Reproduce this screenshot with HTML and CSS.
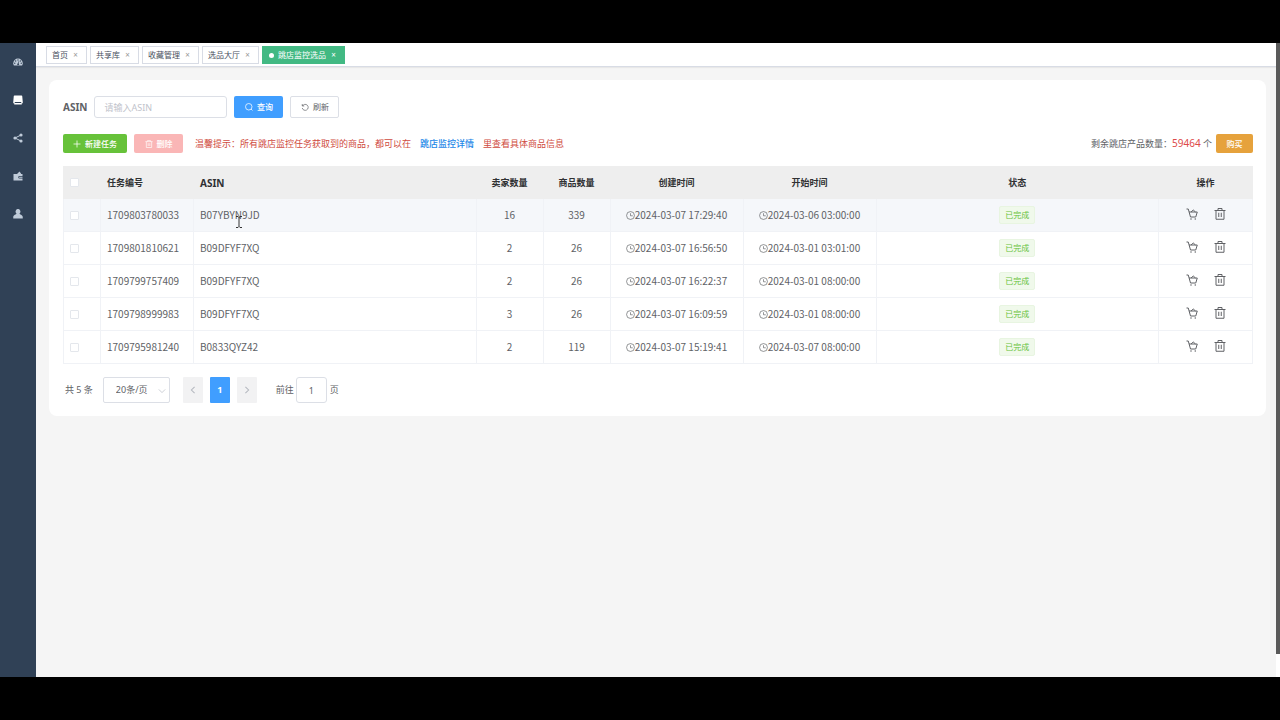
FILE: index.html
```html
<!DOCTYPE html>
<html lang="zh-CN">
<head>
<meta charset="utf-8">
<meta name="viewport" content="width=device-width, initial-scale=1">
<title>跳店监控选品</title>
<link rel="stylesheet" href="styles.css">
</head>
<body>
<svg class="sprite" aria-hidden="true">
  <symbol id="clock" viewBox="0 0 16 16"><g fill="none" stroke="currentColor" stroke-width="1.200"><circle cx="8" cy="8" r="7"/><path d="M8 4v4.500h4"/></g></symbol>
  <symbol id="cart" viewBox="0 0 24 24"><g fill="none" stroke="currentColor" stroke-width="2"><path d="M1 2h3.500L9 18h10.500L22.500 8H6"/><path d="M10 8l4.500-4L19 8"/></g><circle cx="10" cy="22" r="1.500" fill="currentColor"/><circle cx="18.500" cy="22" r="1.500" fill="currentColor"/></symbol>
  <symbol id="trash" viewBox="0 0 24 24"><g fill="none" stroke="currentColor" stroke-width="2"><path d="M1 5h22M8 5V1h8v4M4 5v17.500h16V5M9.500 9.500v8.500M14.500 9.500v8.500"/></g></symbol>
</svg>
<div class="screen">
  <div class="app">
    <nav class="sidebar" aria-label="主菜单">
      <a href="#" aria-label="首页"><svg viewBox="0 0 20 16"><path fill="currentColor" d="M10 1a9.500 9.500 0 0 0-9.500 9.500c0 1.800.5 3.300 1.300 4.500h16.400a8.500 8.500 0 0 0 1.300-4.500A9.500 9.500 0 0 0 10 1z"/><g fill="#304156"><circle cx="10" cy="4" r="1.300"/><circle cx="5.300" cy="6" r="1.300"/><circle cx="3.500" cy="10.500" r="1.300"/><circle cx="16.500" cy="10.500" r="1.300"/><circle cx="14.700" cy="6" r="1.300"/><path d="m11.500 6 1 .3-1.200 4.700a1.900 1.900 0 1 1-1.200-.3z"/></g></svg></a>
      <a href="#" class="current" aria-label="选品"><svg viewBox="0 0 20 20"><path fill="currentColor" d="M3 1h14a1.500 1.500 0 0 1 1.500 1.500L19.500 14H.5L1.500 2.500A1.500 1.500 0 0 1 3 1zM.5 14h3v2h13v-2h3v2.500h-2V19h-15v-2.500h-2z"/></svg></a>
      <a href="#" aria-label="分享"><svg viewBox="0 0 20 20"><path stroke="currentColor" stroke-width="2" fill="none" d="M16 4 4 10l12 6"/><g fill="currentColor"><circle cx="16" cy="4" r="3.200"/><circle cx="4" cy="10" r="3.200"/><circle cx="16" cy="16" r="3.200"/></g></svg></a>
      <a href="#" aria-label="钱包"><svg viewBox="0 0 20 20"><path fill="currentColor" d="M1 6h7l5-5 3 4v1h3v4h-6a2 2 0 0 0 0 5h6v4H1zM13 11.500h6v2h-6a1 1 0 0 1 0-2z"/></svg></a>
      <a href="#" aria-label="用户"><svg viewBox="0 0 20 20"><path fill="currentColor" d="M10 0a4.500 5 0 0 1 3 9c0 1.800 6.500 3 6.500 7v3H.5v-3c0-4 6.500-5.200 6.500-7a4.500 5 0 0 1 3-9z"/></svg></a>
    </nav>
    <main class="main">
      <div class="tabs">
        <a href="#" class="tab">首页<span class="close">×</span></a>
        <a href="#" class="tab">共享库<span class="close">×</span></a>
        <a href="#" class="tab">收藏管理<span class="close">×</span></a>
        <a href="#" class="tab">选品大厅<span class="close">×</span></a>
        <a href="#" class="tab active">跳店监控选品<span class="close">×</span></a>
      </div>
      <section class="card">
        <form class="search">
          <label for="asin">ASIN</label>
          <input id="asin" class="field" type="text" placeholder="请输入ASIN">
          <button type="button" class="btn primary"><svg viewBox="0 0 16 16"><g fill="none" stroke="currentColor" stroke-width="1.500"><circle cx="7.500" cy="7.500" r="6.500"/><path d="m12 12 3 3"/></g></svg>查询</button>
          <button type="button" class="btn plain"><svg viewBox="0 0 16 16"><path fill="none" stroke="currentColor" stroke-width="1.400" d="M2.500 2v4h4M3 6a6 6 0 1 1-.5 4"/></svg>刷新</button>
        </form>
        <div class="actions">
          <button type="button" class="btn success"><svg viewBox="0 0 16 16"><path stroke="currentColor" stroke-width="1.500" d="M8 1v14M1 8h14"/></svg>新建任务</button>
          <button type="button" class="btn danger" disabled><svg viewBox="0 0 24 24"><use href="#trash"/></svg>删除</button>
          <p class="tip"><span>温馨提示：所有跳店监控任务获取到的商品，都可以在</span><a href="#">跳店监控详情</a><span>里查看具体商品信息</span></p>
          <p class="quota">剩余跳店产品数量：<b>59464</b> 个</p>
          <button type="button" class="btn warning">购买</button>
        </div>
        <table class="grid">
          <colgroup><col class="c-check"><col class="c-id"><col><col class="c-num"><col class="c-num"><col class="c-time"><col class="c-time"><col><col class="c-ops"></colgroup>
          <thead>
            <tr><th class="left"><input type="checkbox" aria-label="全选"></th><th class="left">任务编号</th><th class="left latin">ASIN</th><th>卖家数量</th><th>商品数量</th><th>创建时间</th><th>开始时间</th><th>状态</th><th>操作</th></tr>
          </thead>
          <tbody>
            <tr class="hover"><td class="left"><input type="checkbox" aria-label="选择"></td><td class="left">1709803780033</td><td class="left">B07YBYN9JD</td><td>16</td><td>339</td><td><svg class="clock"><use href="#clock"/></svg>2024-03-07 17:29:40</td><td><svg class="clock"><use href="#clock"/></svg>2024-03-06 03:00:00</td><td><span class="tag">已完成</span></td><td><div class="ops"><button type="button" aria-label="商品"><svg><use href="#cart"/></svg></button><button type="button" aria-label="删除"><svg><use href="#trash"/></svg></button></div></td></tr>
            <tr><td class="left"><input type="checkbox" aria-label="选择"></td><td class="left">1709801810621</td><td class="left">B09DFYF7XQ</td><td>2</td><td>26</td><td><svg class="clock"><use href="#clock"/></svg>2024-03-07 16:56:50</td><td><svg class="clock"><use href="#clock"/></svg>2024-03-01 03:01:00</td><td><span class="tag">已完成</span></td><td><div class="ops"><button type="button" aria-label="商品"><svg><use href="#cart"/></svg></button><button type="button" aria-label="删除"><svg><use href="#trash"/></svg></button></div></td></tr>
            <tr><td class="left"><input type="checkbox" aria-label="选择"></td><td class="left">1709799757409</td><td class="left">B09DFYF7XQ</td><td>2</td><td>26</td><td><svg class="clock"><use href="#clock"/></svg>2024-03-07 16:22:37</td><td><svg class="clock"><use href="#clock"/></svg>2024-03-01 08:00:00</td><td><span class="tag">已完成</span></td><td><div class="ops"><button type="button" aria-label="商品"><svg><use href="#cart"/></svg></button><button type="button" aria-label="删除"><svg><use href="#trash"/></svg></button></div></td></tr>
            <tr><td class="left"><input type="checkbox" aria-label="选择"></td><td class="left">1709798999983</td><td class="left">B09DFYF7XQ</td><td>3</td><td>26</td><td><svg class="clock"><use href="#clock"/></svg>2024-03-07 16:09:59</td><td><svg class="clock"><use href="#clock"/></svg>2024-03-01 08:00:00</td><td><span class="tag">已完成</span></td><td><div class="ops"><button type="button" aria-label="商品"><svg><use href="#cart"/></svg></button><button type="button" aria-label="删除"><svg><use href="#trash"/></svg></button></div></td></tr>
            <tr><td class="left"><input type="checkbox" aria-label="选择"></td><td class="left">1709795981240</td><td class="left">B0833QYZ42</td><td>2</td><td>119</td><td><svg class="clock"><use href="#clock"/></svg>2024-03-07 15:19:41</td><td><svg class="clock"><use href="#clock"/></svg>2024-03-07 08:00:00</td><td><span class="tag">已完成</span></td><td><div class="ops"><button type="button" aria-label="商品"><svg><use href="#cart"/></svg></button><button type="button" aria-label="删除"><svg><use href="#trash"/></svg></button></div></td></tr>
          </tbody>
        </table>
        <div class="pager">
          <span class="total">共 5 条</span>
          <div class="size"><select aria-label="每页条数"><option>20条/页</option></select><svg viewBox="0 0 10 10"><path d="m1 3 4 4 4-4" fill="none" stroke="currentColor"/></svg></div>
          <div class="pages">
            <button type="button" aria-label="上一页" disabled><svg viewBox="0 0 10 10"><path d="M7 1 3 5l4 4" fill="none" stroke="currentColor" stroke-width="1.300"/></svg></button>
            <button type="button" class="on">1</button>
            <button type="button" aria-label="下一页" disabled><svg viewBox="0 0 10 10"><path d="m3 1 4 4-4 4" fill="none" stroke="currentColor" stroke-width="1.300"/></svg></button>
          </div>
          <label for="jump">前往</label><input id="jump" class="field jump" type="text" value="1"><span>页</span>
        </div>
      </section>
    </main>
    <div class="scroll"><div class="thumb"></div></div>
    <svg class="cursor" viewBox="0 0 6 12"><path d="M0 .5h2l1 1 1-1h2M3 1.500v9M0 11.500h2l1-1 1 1h2" fill="none" stroke="#333"/></svg>
  </div>
</div>
</body>
</html>
```
FILE: styles.css
```css
* { box-sizing: border-box; }
body {
  margin: 0;
  background: #000;
  color: #606266;
  font-family: "Noto Sans", "Noto Sans CJK SC", sans-serif;
  font-size: 9px;
  line-height: 14px;
}
p { margin: 0; }
a { color: inherit; text-decoration: none; }
button, input, select { font: inherit; color: inherit; margin: 0; }
.sprite { position: absolute; width: 0; height: 0; }

.screen { min-height: 100vh; padding: 43px 0; display: flex; }
.app { position: relative; flex: 1; display: flex; background: #f5f5f5; }

.sidebar {
  width: 36px;
  flex: none;
  display: grid;
  grid-auto-rows: 38px;
  align-content: start;
  color: #bfcbd9;
  background: #304156;
}
.sidebar a { display: grid; place-items: center; }
.sidebar svg { width: 10px; height: 10px; }
.sidebar .current { color: #fff; }

.main { flex: 1; min-width: 0; }
.tabs {
  display: flex;
  gap: 3px;
  height: 24px;
  padding: 3px 10px;
  background: #fff;
  border-bottom: 1px solid #d8dce5;
  box-shadow: 0 1px 1px #0000000d;
}
.tab {
  display: flex;
  align-items: center;
  height: 18px;
  padding: 0 5px;
  border: 1px solid #d8dce5;
  color: #495060;
  font-size: 8px;
}
.close { width: 11px; margin-left: 2px; text-align: center; color: #999; }
.tab.active { background: #42b983; border-color: #42b983; color: #fff; }
.tab.active .close { color: #fff; }
.tab.active::before {
  content: "";
  width: 5px;
  height: 5px;
  margin: 0 4px 0 1px;
  border-radius: 50%;
  background: #fff;
}

.card { margin: 13px 10px 0 13px; padding: 16px 13px 13px 14px; background: #fff; border-radius: 8px; }
.search { display: flex; align-items: center; gap: 7px; }
.search label { font-size: 10px; font-weight: 700; }
.field {
  width: 133px;
  height: 22px;
  padding: 0 9px;
  background: #fff;
  border: 1px solid #dcdfe6;
  border-radius: 3px;
  outline: 0;
}
.field::placeholder { color: #bfc3cb; opacity: 1; }
.btn {
  display: inline-flex;
  align-items: center;
  justify-content: center;
  gap: 4px;
  height: 19px;
  padding: 0 4px;
  border: 1px solid transparent;
  border-radius: 2px;
  color: #fff;
  font-size: 8px;
  font-weight: 500;
  white-space: nowrap;
}
.btn svg { flex: none; width: 8px; height: 8px; }
.search .btn { height: 22px; width: 49px; }
.primary { background: #409eff; }
.search .plain { background: #fff; border-color: #dcdfe6; color: #606266; font-weight: 400; }
.success { background: #67c23a; width: 64px; }
.danger { background: #fab6b6; width: 49px; }
.warning { background: #e6a23c; width: 37px; }

.actions { display: flex; align-items: center; gap: 7px; margin: 16px 0 13px; }
.tip { display: flex; gap: 9px; margin-left: 5px; color: #cf4b40; }
.tip a { color: #1b87e8; font-weight: 500; }
.quota { margin-left: auto; margin-right: -3px; }
.quota b { color: #dd4a4a; font-size: 10px; font-weight: 400; }

.grid {
  width: 100%;
  table-layout: fixed;
  border-collapse: collapse;
  border: 1px solid #ebeef5;
  font-size: 10px;
}
.c-check { width: 37px; }
.c-id { width: 93px; }
.c-num { width: 67px; }
.c-time { width: 133px; }
.c-ops { width: 94px; }
.grid th, .grid td { padding: 0; border: 1px solid #f0f2f6; text-align: center; white-space: nowrap; }
.grid th { height: 32px; background: #eee; border-color: #eee; color: #303133; font-size: 9px; font-weight: 700; }
.grid td { height: 33px; font-family: "Noto Sans CJK SC", sans-serif; }
.grid .latin { font-size: 10px; }
.grid .left { text-align: left; padding-left: 6px; }
.grid .hover td { background: #f5f7fa; }
.grid input {
  appearance: none;
  display: block;
  width: 9px;
  height: 9px;
  border: 1px solid #e4e7ec;
  border-radius: 1px;
  background: #fff;
}
.clock { width: 9px; height: 9px; vertical-align: -1px; }
.tag {
  display: inline-block;
  height: 18px;
  padding: 0 5px;
  border: 1px solid #e8f5e1;
  border-radius: 2px;
  background: #f0f9eb;
  color: #67c23a;
  font-size: 8px;
  line-height: 16px;
  vertical-align: middle;
}
.ops { display: flex; justify-content: center; gap: 16px; padding-bottom: 2px; }
.ops button { display: flex; padding: 0; border: 0; background: none; }
.ops svg { width: 12px; height: 12px; }

.pager { display: flex; align-items: center; margin-top: 13px; padding-left: 2px; }
.size { position: relative; margin: 0 13px 0 10px; }
.size select {
  appearance: none;
  display: block;
  width: 67px;
  height: 26px;
  padding: 0 12px;
  border: 1px solid #dcdfe6;
  border-radius: 2px;
  background: #fff;
}
.size svg { position: absolute; right: 4px; top: 10px; width: 8px; height: 8px; color: #c0c4cc; pointer-events: none; }
.pages { display: flex; gap: 7px; margin-right: 19px; }
.pages button {
  display: grid;
  place-items: center;
  width: 20px;
  height: 26px;
  padding: 0;
  border: 0;
  border-radius: 1px;
  background: #f2f2f3;
  color: #b4b8bf;
}
.pages svg { width: 8px; height: 8px; }
.pages .on { background: #409eff; color: #fff; font-weight: 700; }
.jump { width: 31px; height: 26px; padding: 0; margin: 0 3px 0 2px; text-align: center; }

.scroll { width: 4px; flex: none; background: #fff; }
.thumb { height: 611px; background: #5a5a5a; }
.cursor { position: absolute; left: 236px; top: 173px; width: 6px; height: 12px; }
```
